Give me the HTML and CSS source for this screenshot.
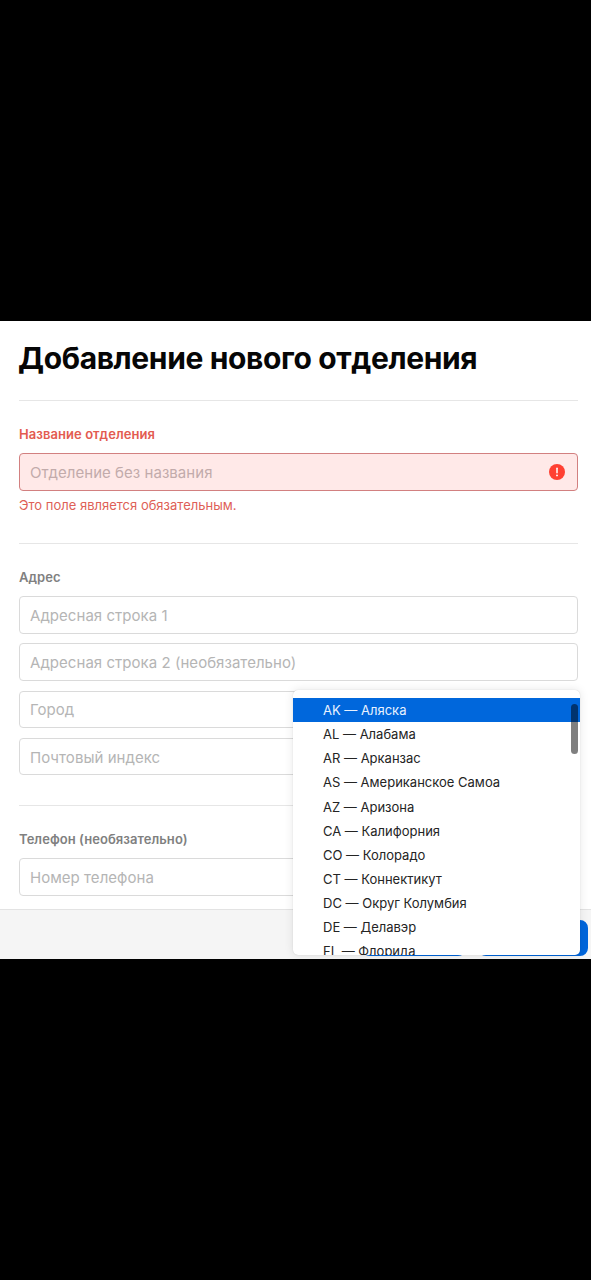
FILE: index.html
```html
<!DOCTYPE html>
<html lang="ru">
<head>
    <meta charset="UTF-8">
    <meta name="viewport" content="width=device-width, initial-scale=1.0">
    <title>Добавление нового отделения</title>
    <link rel="stylesheet" href="styles.css">
</head>
<body>

    <div class="dialog">
        <form class="form">
            <h1 class="title">Добавление нового отделения</h1>

            <section class="section section-name">
                <label class="label label-error" for="name">Название отделения</label>
                <div class="field field-error">
                    <input type="text" id="name" placeholder="Отделение без названия">
                    <svg class="error-icon" viewBox="0 0 16 16" width="16" height="16">
                        <circle cx="8" cy="8" r="8" fill="#ff4032"/>
                        <path d="M8 4.2V8.7" stroke="#fff" stroke-width="1.5" stroke-linecap="round"/>
                        <circle cx="8" cy="11.4" r="0.95" fill="#fff"/>
                    </svg>
                </div>
                <p class="error-text">Это поле является обязательным.</p>
            </section>

            <section class="section section-address">
                <label class="label" for="address1">Адрес</label>
                <div class="fields">
                    <div class="field"><input type="text" id="address1" placeholder="Адресная строка 1"></div>
                    <div class="field"><input type="text" placeholder="Адресная строка 2 (необязательно)"></div>
                    <div class="field"><input type="text" placeholder="Город"></div>
                    <div class="field"><input type="text" placeholder="Почтовый индекс"></div>
                </div>
            </section>

            <section class="section section-phone">
                <label class="label" for="phone">Телефон (необязательно)</label>
                <div class="field"><input type="text" id="phone" placeholder="Номер телефона"></div>
            </section>
        </form>

        <div class="footer">
            <button class="button button-cancel" aria-label="Отменить"></button>
            <button class="button button-save" aria-label="Сохранить"></button>
        </div>

        <div class="menu">
            <ul class="menu-list">
                <li class="menu-item selected">AK — Аляска</li>
                <li class="menu-item">AL — Алабама</li>
                <li class="menu-item">AR — Арканзас</li>
                <li class="menu-item">AS — Американское Самоа</li>
                <li class="menu-item">AZ — Аризона</li>
                <li class="menu-item">CA — Калифорния</li>
                <li class="menu-item">CO — Колорадо</li>
                <li class="menu-item">CT — Коннектикут</li>
                <li class="menu-item">DC — Округ Колумбия</li>
                <li class="menu-item">DE — Делавэр</li>
                <li class="menu-item">FL — Флорида</li>
            </ul>
            <div class="scrollbar"></div>
        </div>
    </div>

</body>
</html>
```
FILE: styles.css
```css
* {
    margin: 0;
    padding: 0;
    box-sizing: border-box;
    font-family: Inter, "Liberation Sans", sans-serif;
}

body {
    display: flex;
    flex-direction: column;
    justify-content: center;
    height: 1280px;
    background-color: #000;
    overflow: hidden;
}

.dialog {
    position: relative;
    display: flex;
    flex-direction: column;
    height: 638px;
    background-color: #fff;
}

.form {
    flex: 1;
    padding: 0 13px 0 19px;
}

.title {
    height: 79px;
    margin-left: -1px;
    padding-top: 18px;
    font-size: 30px;
    line-height: 38px;
    font-weight: 700;
    letter-spacing: -0.37px;
    white-space: nowrap;
    color: #060606;
}

.section {
    border-top: 1.5px solid #e6e6e6;
    padding-top: 24px;
}

.section-name {
    height: 143px;
}

.section-address {
    height: 262px;
}

.label {
    display: block;
    height: 28px;
    font-size: 13px;
    line-height: 18px;
    font-weight: 600;
    letter-spacing: 0.06px;
    color: #808080;
}

.label-error {
    color: #e35b50;
}

.fields {
    display: grid;
    gap: 9.8px;
}

.field {
    display: flex;
    align-items: center;
    height: 37.5px;
    padding: 0 12px 0 10px;
    border: 1.5px solid #dadada;
    border-radius: 4px;
    background-color: #fff;
}

.field input {
    flex: 1;
    min-width: 0;
    padding-top: 1px;
    border: none;
    outline: none;
    background: transparent;
    font-size: 15px;
    letter-spacing: 0.04px;
}

.field input::placeholder {
    color: #b5b5b5;
}

.field-error {
    border-color: #d28080;
    background-color: #ffe9e8;
}

.field-error input::placeholder {
    color: #c2abab;
}

.error-text {
    margin-top: 5px;
    font-size: 13px;
    line-height: 18px;
    color: #de5f57;
}

.footer {
    display: flex;
    justify-content: flex-end;
    gap: 12px;
    height: 50px;
    padding: 10px 3px 3px 0;
    border-top: 1px solid #e3e3e3;
    background-color: #f5f5f5;
}

.button {
    height: 36px;
    border: 2px solid #0066dc;
    border-radius: 8px;
}

.button-cancel {
    width: 104px;
    background-color: #fff;
}

.button-save {
    width: 110px;
    background-color: #0066dc;
}

/* open list of states, lies over the form */
.menu {
    position: absolute;
    top: 369px;
    left: 293px;
    width: 287px;
    height: 264.5px;
    padding-top: 8px;
    border-radius: 5px;
    background-color: #fff;
    box-shadow: 0 0 1px rgba(0, 0, 0, 0.2), 0 0 10px rgba(0, 0, 0, 0.1);
    overflow: hidden;
}

.menu-list {
    list-style: none;
}

.menu-item {
    height: 24.13px;
    padding-left: 30px;
    font-size: 13px;
    line-height: 24.5px;
    white-space: nowrap;
    color: #242424;
}

.menu-item.selected {
    background-color: #0067dc;
    color: #e8f2ff;
}

.scrollbar {
    position: absolute;
    top: 14px;
    right: 2px;
    width: 7px;
    height: 50px;
    border-radius: 4px;
    background-color: rgba(0, 0, 0, 0.5);
}
```
